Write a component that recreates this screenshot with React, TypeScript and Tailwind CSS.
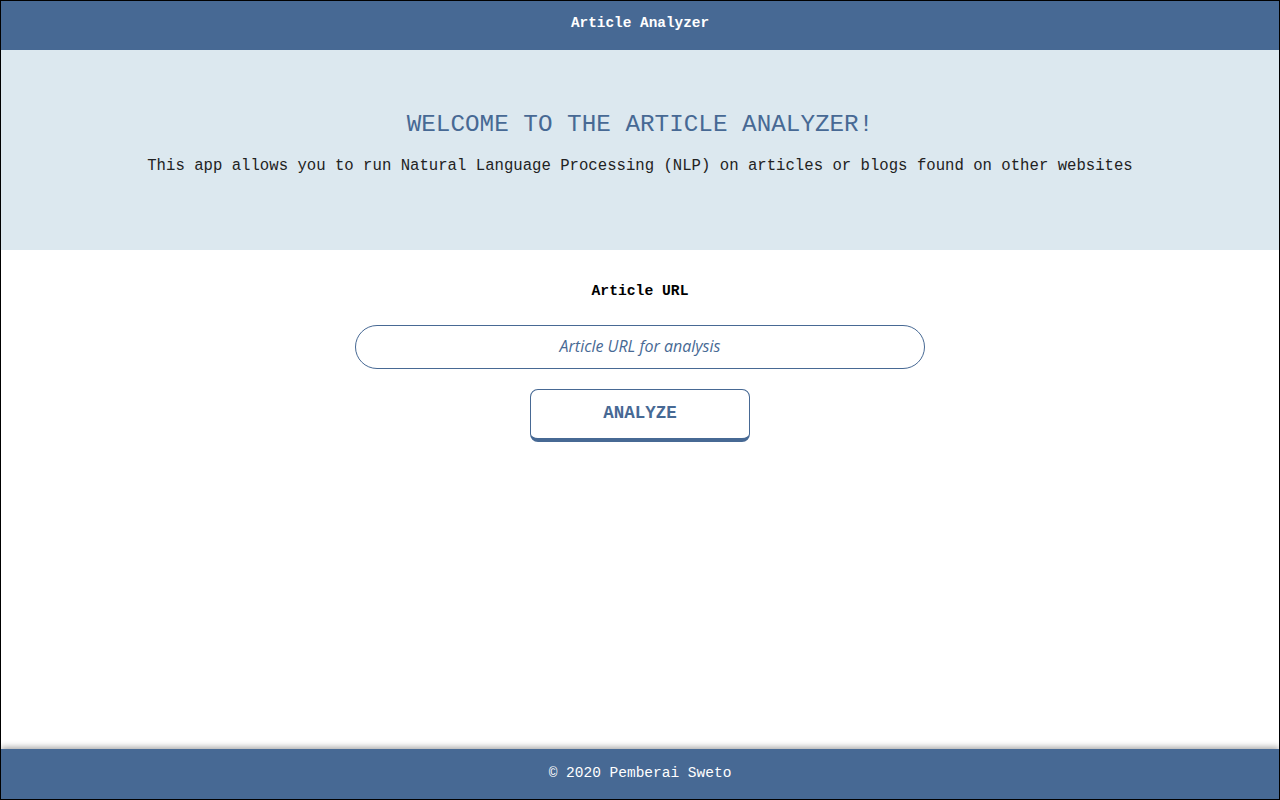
import React from 'react';

const mono = "font-['Liberation_Mono',monospace]";

export default function App() {
  return (
    <div className="h-[800px] w-[1280px] flex flex-col border border-black bg-white overflow-hidden">
      <header className={`h-[49px] bg-[#476994] flex items-center justify-center pb-[4px] text-white font-bold text-[14.4px] ${mono}`}>
        Article Analyzer
      </header>

      <section className="h-[200px] bg-[#dce8ef] flex flex-col items-center pt-[60px]">
        <h1 className={`text-[24.3px] leading-[30px] text-[#476994] ${mono}`}>
          WELCOME TO THE ARTICLE ANALYZER!
        </h1>
        <p className={`mt-[16px] text-[15.65px] leading-[20px] text-[#222] ${mono}`}>
          This app allows you to run Natural Language Processing (NLP) on articles or blogs found on other websites
        </p>
      </section>

      <main className="flex-1 flex flex-col items-center pt-[31px]">
        <label htmlFor="url" className={`text-[14.7px] leading-[20px] font-bold text-black ${mono}`}>
          Article URL
        </label>
        <input
          id="url"
          type="text"
          placeholder="Article URL for analysis"
          className="mt-[24px] w-[570px] h-[44px] pb-[2px] rounded-full border border-[#476994] text-center text-[16px] italic text-[#476994] font-['Open_Sans',sans-serif] placeholder:text-[#476994] outline-none"
        />
        <button className={`mt-[20px] w-[220px] h-[53px] rounded-[8px] border border-[#476994] border-b-[4px] bg-white text-[#476994] font-bold text-[17.5px] pb-[2px] ${mono}`}>
          ANALYZE
        </button>
      </main>

      <footer className={`h-[50px] bg-[#476994] flex items-center justify-center text-white text-[14.5px] shadow-[0_-2px_6px_rgba(0,0,0,0.35)] ${mono}`}>
        © 2020 Pemberai Sweto
      </footer>
    </div>
  );
}
